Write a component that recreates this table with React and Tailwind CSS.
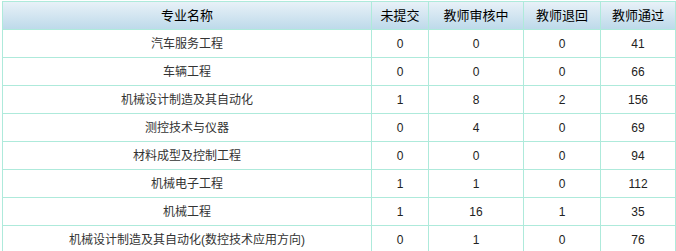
// Major progress table: submissions per major by review status
const rows = [
  { name: '汽车服务工程', pending: 0, reviewing: 0, returned: 0, passed: 41 },
  { name: '车辆工程', pending: 0, reviewing: 0, returned: 0, passed: 66 },
  { name: '机械设计制造及其自动化', pending: 1, reviewing: 8, returned: 2, passed: 156 },
  { name: '测控技术与仪器', pending: 0, reviewing: 4, returned: 0, passed: 69 },
  { name: '材料成型及控制工程', pending: 0, reviewing: 0, returned: 0, passed: 94 },
  { name: '机械电子工程', pending: 1, reviewing: 1, returned: 0, passed: 112 },
  { name: '机械工程', pending: 1, reviewing: 16, returned: 1, passed: 35 },
  { name: '机械设计制造及其自动化(数控技术应用方向)', pending: 0, reviewing: 1, returned: 0, passed: 76 },
];

const headers = ['专业名称', '未提交', '教师审核中', '教师退回', '教师通过'];
const widths = ['w-[369px]', 'w-[57px]', 'w-[95px]', 'w-[77px]', 'w-[75px]'];

const App = () => (
  <div className="w-[676px] h-[251px] overflow-hidden bg-white pt-px pl-[2px]">
    <table
      className="w-[673px] table-fixed border-collapse text-[12px] text-[#222]"
      style={{ fontFamily: '"Liberation Sans", "Noto Sans CJK SC", sans-serif' }}
    >
      <thead>
        <tr className="h-[28px] bg-gradient-to-b from-[#e8f1f8] to-[#bcd9ea]">
          {headers.map((h, i) => (
            <th
              key={h}
              className={`${widths[i]} border border-[#aeeadb] font-normal text-[13px] text-black text-center p-0`}
            >
              {h}
            </th>
          ))}
        </tr>
      </thead>
      <tbody>
        {rows.map((r) => (
          <tr key={r.name} className="h-[28px]">
            <td className="border border-[#aeeadb] text-center p-0 text-[#333]">{r.name}</td>
            <td className="border border-[#aeeadb] text-center p-0">{r.pending}</td>
            <td className="border border-[#aeeadb] text-center p-0">{r.reviewing}</td>
            <td className="border border-[#aeeadb] text-center p-0">{r.returned}</td>
            <td className="border border-[#aeeadb] text-center p-0">{r.passed}</td>
          </tr>
        ))}
      </tbody>
    </table>
  </div>
);

export default App;
